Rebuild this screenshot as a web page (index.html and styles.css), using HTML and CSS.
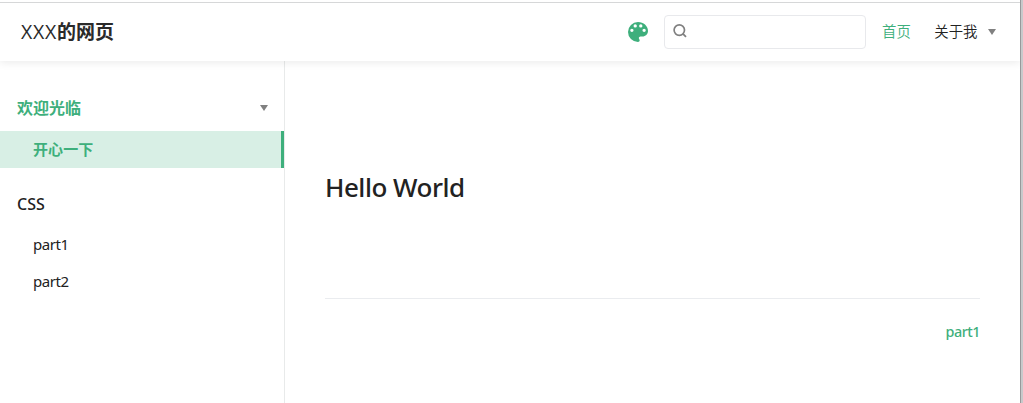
FILE: index.html
```html
<!DOCTYPE html>
<html lang="zh">
<head>
<meta charset="utf-8">
<title>XXX的网页</title>
<link rel="stylesheet" href="styles.css">
</head>
<body>
<div class="page">
  <header class="navbar">
    <a class="site-name"><span class="latin">XXX</span>的网页</a>
    <svg class="palette" viewBox="3 3 18 18" aria-hidden="true"><path d="M12 3a9 9 0 0 0 0 18c.83 0 1.5-.67 1.5-1.5 0-.39-.15-.74-.39-1.01-.23-.26-.38-.61-.38-.99 0-.83.67-1.5 1.5-1.5H16c2.76 0 5-2.24 5-5 0-4.42-4.03-8-9-8zm-5.5 9a1.5 1.5 0 1 1 0-3 1.5 1.5 0 0 1 0 3zm3-4a1.5 1.5 0 1 1 0-3 1.5 1.5 0 0 1 0 3zm5 0a1.5 1.5 0 1 1 0-3 1.5 1.5 0 0 1 0 3zm3 4a1.5 1.5 0 1 1 0-3 1.5 1.5 0 0 1 0 3z"/></svg>
    <div class="search">
      <svg class="search-icon" viewBox="0 0 14 14" aria-hidden="true"><circle cx="6.3" cy="6.1" r="5.2"/><path d="M10 9.8l3 3"/></svg>
    </div>
    <nav class="links">
      <a class="link active">首页</a>
      <a class="link">关于我</a>
      <span class="arrow"></span>
    </nav>
  </header>
  <div class="body">
    <aside class="sidebar">
      <div class="group-title current"><span class="label">欢迎光临</span><span class="arrow"></span></div>
      <a class="item selected">开心一下</a>
      <div class="group-title second">CSS</div>
      <a class="item">part1</a>
      <a class="item">part2</a>
    </aside>
    <main class="content">
      <h1 class="heading">Hello World</h1>
      <div class="pager"><a class="next">part1</a></div>
    </main>
  </div>
</div>
</body>
</html>
```
FILE: styles.css
```css
* { box-sizing: border-box; }
body {
  margin: 0;
  background: #fff;
  color: #222;
  font-family: "Noto Sans", "Noto Sans CJK SC", sans-serif;
}
.page {
  width: 1023px;
  height: 403px;
  padding-top: 2px;
  border-right: 2px solid #c8c9cb;
  box-shadow: inset -1px 0 #98999b;
  display: flex;
  flex-direction: column;
  overflow: hidden;
}
.navbar {
  width: 1020px;
  height: 59px;
  flex: none;
  border-top: 1px solid #d6d7d8;
  padding: 0 24px 0 21px;
  display: flex;
  align-items: center;
  box-shadow: 0 2px 8px rgba(0, 0, 0, .08);
  clip-path: inset(0 0 -14px 0);
}
.site-name {
  font-family: "Noto Sans CJK SC", sans-serif;
  font-size: 19px;
  font-weight: 700;
  line-height: 28px;
  color: #2a2a2a;
  margin-right: auto;
  padding-bottom: 1px;
}
.latin {
  font-family: "Open Sans", sans-serif;
  font-weight: 500;
  font-size: 19.5px;
  letter-spacing: .7px;
}
.palette {
  width: 20px;
  height: 20px;
  margin-right: 16px;
  fill: #3eaf7c;
}
.search {
  width: 202px;
  height: 34px;
  border: 1px solid #e8e9ec;
  border-radius: 4px;
  padding: 8px;
  margin-right: 16px;
}
.search-icon {
  display: block;
  width: 14px;
  height: 14px;
  fill: none;
  stroke: #808080;
  stroke-width: 1.7;
}
.links {
  display: flex;
  align-items: center;
}
.link {
  font-family: "Noto Sans CJK SC", sans-serif;
  font-size: 14.4px;
  line-height: 24px;
  font-weight: 350;
  padding-bottom: 2px;
}
.active {
  color: #3eaf7c;
  margin-right: 23.5px;
}
.arrow {
  width: 8px;
  border: 4px solid transparent;
  border-top: 6px solid #808080;
  border-bottom: 0;
}
.links .arrow { margin-left: 10.5px; }
.body {
  flex: 1;
  display: flex;
  width: 1020px;
}
.sidebar {
  width: 285px;
  border-right: 1px solid #e8eaea;
  padding-top: 24px;
}
.group-title {
  height: 46px;
  padding: 0 16px 0 17px;
  display: flex;
  align-items: center;
  justify-content: space-between;
  font-size: 16px;
  font-weight: 500;
}
.current {
  color: #3eaf7c;
  font-weight: 600;
}
.current .label { padding-bottom: 2px; }
.second {
  margin-top: 13px;
}
.item {
  height: 37px;
  padding: 0 0 2px 33px;
  display: flex;
  align-items: center;
  font-size: 15px;
  letter-spacing: -.45px;
}
.second + .item { margin-top: -1px; }
.selected {
  background: #d8efe5;
  border-right: 3px solid #3eaf7c;
  color: #3eaf7c;
  font-weight: 600;
  letter-spacing: .1px;
}
.content {
  flex: 1;
  padding: 103px 40px 0;
}
.heading {
  margin: 0;
  height: 135px;
  border-bottom: 1px solid #eaecef;
  font-size: 26px;
  line-height: 46px;
  font-weight: 500;
  letter-spacing: -.5px;
}
.pager {
  text-align: right;
  padding-top: 22px;
  line-height: 22px;
  font-size: 14.4px;
}
.next {
  color: #3eaf7c;
  font-weight: 500;
  letter-spacing: -.5px;
}
```
